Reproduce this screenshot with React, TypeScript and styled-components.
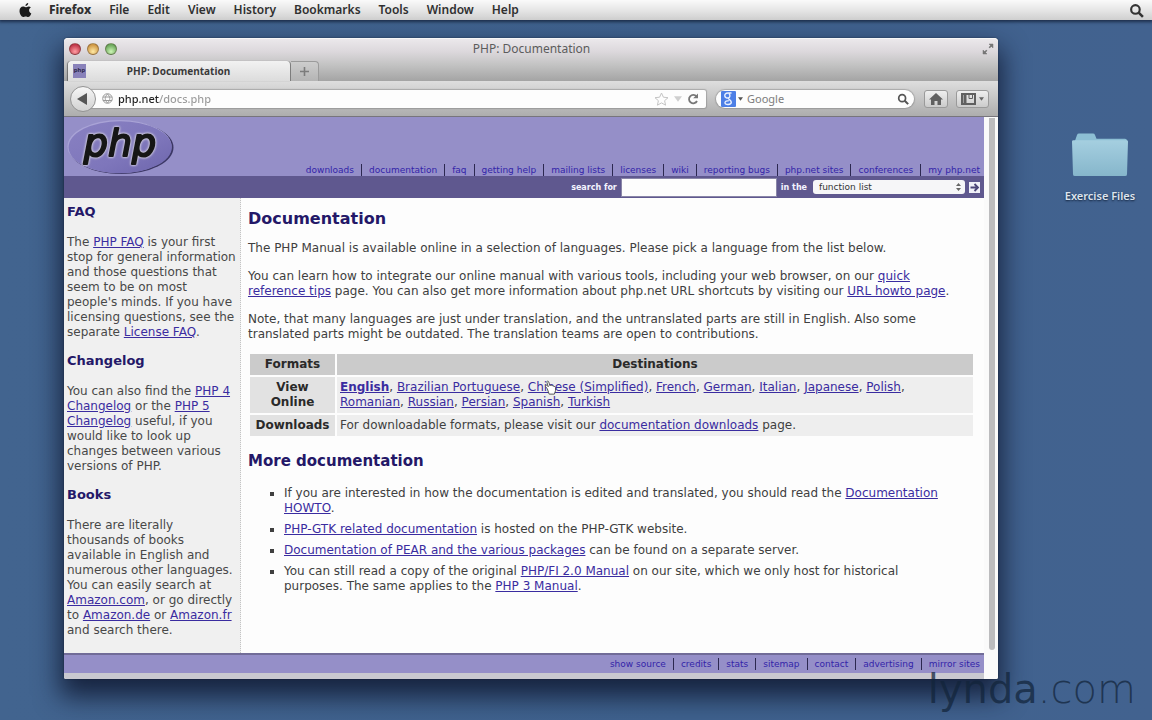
import React from "react";
import styled, { createGlobalStyle } from "styled-components";

const page = '"DejaVu Sans", Verdana, sans-serif';
const system = '"Noto Sans", "Open Sans", sans-serif';

const GlobalStyle = createGlobalStyle`
  * { box-sizing: border-box; }
  body { margin: 0; background: #42628f; font-family: ${page}; }
  button, input, select { font: inherit; margin: 0; padding: 0; border: 0; background: none; }
  svg { display: block; }
`;

const Desktop = styled.div`
  min-height: 100vh;
  position: relative;
  overflow: hidden;
  background: linear-gradient(90deg, #42648f, #3f628e 60%, #42628f);
`;

const MenuBar = styled.header`
  height: 20px;
  display: flex;
  align-items: center;
  padding: 0 8px 0 18px;
  background: linear-gradient(#fafafa, #e4e4e4 55%, #cfcfcf);
  box-shadow: 0 1px 3px 1px rgba(16, 28, 52, 0.75);
  font-family: ${system};
`;

const Menus = styled.nav`
  display: flex;
  flex: 1;
  gap: 18px;
  margin-left: 16px;
`;

const MenuButton = styled.button<{ $strong?: boolean }>`
  font-size: 12px;
  line-height: 20px;
  font-weight: ${(p) => (p.$strong ? 800 : 600)};
  color: #303030;
`;

const IconButton = styled.button`
  display: flex;
  align-items: center;
  justify-content: center;
`;

const Workspace = styled.div`
  display: flex;
  align-items: flex-start;
  padding: 18px 0 40px 64px;
`;

const BrowserWindow = styled.main`
  flex: 1;
  min-width: 0;
  border-radius: 4px 4px 2px 2px;
  background: #fdfdfd;
  box-shadow: 0 14px 26px 4px rgba(12, 20, 44, 0.8), 0 0 2px rgba(0, 0, 0, 0.5);
`;

const Chrome = styled.div`
  border-radius: 4px 4px 0 0;
  background: linear-gradient(#ebe8eb, #dcd8dc 30%, #c4c4c4 60%, #a4a4a4);
  border-top: 1px solid #f6f6f6;
`;

const TitleBar = styled.div`
  height: 22px;
  display: grid;
  grid-template-columns: 60px 1fr 60px;
  align-items: center;
  padding: 0 4px 2px 5px;
  font-family: ${system};
`;

const Lights = styled.div`
  display: flex;
  gap: 6px;
`;

const Light = styled.button<{ $from: string; $to: string }>`
  width: 12px;
  height: 12px;
  border-radius: 6px;
  border: 1px solid rgba(70, 50, 40, 0.4);
  background: radial-gradient(circle at 50% 75%, ${(p) => p.$to}, ${(p) => p.$from} 75%);
`;

const WindowTitle = styled.div`
  text-align: center;
  font-size: 12px;
  line-height: 18px;
  color: #5c5c5c;
`;

const Expand = styled(IconButton)`
  justify-self: end;
`;

const TabStrip = styled.div`
  height: 20px;
  display: flex;
  align-items: stretch;
  padding-left: 4px;
`;

const Tab = styled.button`
  width: 223px;
  display: grid;
  grid-template-columns: 14px 1fr 14px;
  align-items: center;
  padding: 0 6px 0 5px;
  background: linear-gradient(#f2f2f2, #dcdcdc);
  border-radius: 4px 4px 0 0;
  border-right: 1px solid #7d7d7d;
  box-shadow: -1px 0 1px rgba(0, 0, 0, 0.4);
  font-family: ${system};
  font-size: 10px;
  font-weight: 700;
  color: #3a3a3a;
`;

const Favicon = styled.span`
  width: 13px;
  height: 14px;
  background: #8982ba;
  color: #2a2648;
  font-size: 6px;
  line-height: 13px;
  overflow: hidden;
`;

const NewTab = styled(IconButton)`
  width: 28px;
  border: 1px solid #9b9b9b;
  border-width: 1px 1px 0 0;
  border-radius: 0 4px 0 0;
  background: linear-gradient(#cdcdcd, #b4b4b4);
`;

const Toolbar = styled.div`
  height: 36px;
  display: flex;
  align-items: center;
  padding: 0 9px 0 6px;
  background: linear-gradient(#dedede, #c8c8c8 45%, #adadad);
  border-bottom: 1px solid #77757c;
`;

const BackButton = styled(IconButton)`
  width: 26px;
  height: 26px;
  border-radius: 13px;
  border: 1px solid #949494;
  background: linear-gradient(#f6f6f6, #d2d2d2);
  z-index: 1;
`;

const Field = styled.div<{ $round?: boolean }>`
  height: 18px;
  display: flex;
  align-items: center;
  background: #fdfdfd;
  box-shadow: 0 0 1px 1px rgba(120, 120, 120, 0.45);
  ${(p) =>
    p.$round
      ? "width: 198px; border-radius: 9px; padding: 0 5px; margin-left: 10px; gap: 2px;"
      : "flex: 1; border-radius: 0 2px 2px 0; padding: 0 7px 0 12px; margin-left: -6px; gap: 5px;"}
`;

const AddressInput = styled.input`
  flex: 1;
  min-width: 0;
  font-family: ${system};
  font-size: 11px;
  font-weight: 500;
  line-height: 18px;
  height: 18px;
  color: transparent;
  background: linear-gradient(90deg, #222 41px, #9a9a9a 41px);
  background-clip: text;
  -webkit-background-clip: text;
`;

const SearchInput = styled.input`
  flex: 1;
  min-width: 0;
  margin-left: 2px;
  font-family: ${system};
  font-size: 11px;
  height: 18px;
  &::placeholder { color: #7c7c7c; opacity: 1; }
`;

const ToolButton = styled(IconButton)<{ $wide?: boolean }>`
  width: ${(p) => (p.$wide ? 33 : 24)}px;
  height: 18px;
  gap: 3px;
  margin-left: ${(p) => (p.$wide ? 8 : 10)}px;
  border: 1px solid #9a9a9a;
  border-radius: 3px;
  background: linear-gradient(#efefef, #cbcbcb);
`;

const Viewport = styled.div`
  display: flex;
`;

const Site = styled.div`
  flex: 1;
  min-width: 0;
`;

const ScrollTrack = styled.div`
  width: 14px;
  display: flex;
  padding: 1px 3px 29px 5px;
  background: #fafafa;
  border-radius: 0 0 2px 0;
`;

const ScrollThumb = styled.div`
  flex: 1;
  border-radius: 0 0 3px 3px;
  background: #bcbcbe;
`;

const SiteHeader = styled.div`
  height: 59px;
  display: flex;
  align-items: flex-end;
  justify-content: space-between;
  padding-left: 3px;
  background: #958fc8;
`;

const LogoLink = styled.a`
  padding-bottom: 1px;
`;

const LogoText = styled.text`
  font: italic 38px ${page};
  text-anchor: middle;
  fill: #161616;
  stroke: #161616;
  stroke-width: 2px;
  stroke-linejoin: round;
  filter: drop-shadow(0 0 1px #dedbea) drop-shadow(0 0 1px #c9c5da);
`;

const Links = styled.nav<{ $footer?: boolean }>`
  display: flex;
  align-items: center;
  justify-content: flex-end;
  height: ${(p) => (p.$footer ? 18 : 12)}px;
  padding-right: 4px;
`;

const SmallLink = styled.a`
  padding: 0 7px;
  font-size: 9px;
  line-height: 12px;
  color: #3324a8;
  text-decoration: none;
  & + & { border-left: 1px solid #2c2850; }
  &:last-child { padding-right: 0; }
`;

const SearchBar = styled.form`
  height: 22px;
  display: flex;
  align-items: center;
  justify-content: flex-end;
  gap: 4px;
  padding-right: 4px;
  background: #5f588f;
  color: #f4f4ff;
  font-size: 8px;
  font-weight: 700;
`;

const QueryInput = styled.input`
  width: 156px;
  height: 19px;
  background: #fdfdfd;
  border: 1px solid #8a86a8;
`;

const SelectWrap = styled.span`
  display: grid;
  align-items: center;
  margin-left: 2px;
  & > * { grid-area: 1 / 1; }
  & > svg { justify-self: end; margin-right: 4px; }
`;

const ScopeSelect = styled.select`
  appearance: none;
  width: 152px;
  height: 14px;
  padding-left: 6px;
  border-radius: 3px;
  background: #f6f6f8;
  font-size: 9px;
  font-weight: 400;
  line-height: 14px;
  color: #333;
`;

const Columns = styled.div`
  display: grid;
  grid-template-columns: 177px 1fr;
`;

const Sidebar = styled.aside`
  padding: 6px 0 15px 3px;
  background: #f0f0f0;
  border-right: 1px dotted #c4c4c4;
`;

const SideHeading = styled.h2`
  margin: 13px 0 15px;
  font-size: 13px;
  line-height: 16px;
  color: #241868;
  &:first-child { margin-top: 0; }
`;

const SideText = styled.p`
  margin: 0;
  font-size: 12px;
  line-height: 15px;
  color: #484848;
`;

const Article = styled.section`
  padding: 11px 9px 0 7px;
  font-size: 12px;
  line-height: 15px;
  color: #404040;
`;

const Heading = styled.h1`
  margin: 0 0 12px;
  font-size: 16px;
  line-height: 20px;
  color: #241868;
`;

const SubHeading = styled.h2`
  margin: 0 0 15px;
  font-size: 15px;
  line-height: 20px;
  color: #241868;
`;

const Paragraph = styled.p`
  margin: 0 0 13px;
`;

const A = styled.a<{ $strong?: boolean }>`
  color: #3a2ca0;
  text-decoration: underline;
  font-weight: ${(p) => (p.$strong ? 700 : 400)};
`;

const Formats = styled.table`
  width: 100%;
  margin: -3px 0 13px;
  border-spacing: 2px;
  th, td { padding: 3px; background: #eeeeee; }
  thead th { background: #cbcbcb; }
  th { color: #2a2a2a; }
  tbody th { background: #e2e2e2; }
`;

const List = styled.ul`
  margin: 0;
  padding-left: 36px;
  list-style: square;
`;

const Item = styled.li`
  margin-bottom: 6px;
`;

const SiteFooter = styled.footer`
  border-top: 2px solid #716c98;
  border-bottom: 6px solid #c9c9d0;
  border-bottom-left-radius: 2px;
  background: #958fc8;
`;

const DesktopIcons = styled.aside`
  width: 154px;
  padding: 95px 0 0 50px;
`;

const DesktopFile = styled.button`
  width: 104px;
  display: flex;
  flex-direction: column;
  align-items: center;
  gap: 11px;
  font-family: ${system};
  font-size: 11px;
  line-height: 16px;
  font-weight: 600;
  color: #dde4ee;
  text-shadow: 0 1px 2px #10203a;
`;

const Watermark = styled.div`
  position: absolute;
  right: 16px;
  bottom: 8px;
  font-family: ${page};
  font-size: 40px;
  line-height: 46px;
  font-weight: 200;
  color: rgba(18, 36, 58, 0.72);
  b { font-weight: 400; }
`;

const Pointer = styled.svg`
  position: absolute;
  left: 543px;
  top: 380px;
`;

const Magnifier = ({ size = 14, color = "#333" }: { size?: number; color?: string }) => (
  <svg width={size} height={size} viewBox="0 0 14 14" fill="none" stroke={color}>
    <circle cx="6" cy="6" r="4" strokeWidth="2" />
    <path d="M9 9l4 4" strokeWidth="2.4" />
  </svg>
);

const topLinks = ["downloads", "documentation", "faq", "getting help", "mailing lists", "licenses", "wiki", "reporting bugs", "php.net sites", "conferences", "my php.net"];
const footLinks = ["show source", "credits", "stats", "sitemap", "contact", "advertising", "mirror sites"];
const languages = ["Brazilian Portuguese", "Chinese (Simplified)", "French", "German", "Italian", "Japanese", "Polish", "Romanian", "Russian", "Persian", "Spanish", "Turkish"];

export default function App() {
  return (
    <Desktop>
      <GlobalStyle />
      <MenuBar>
        <svg width="15" height="16" viewBox="0 0 15 16" fill="#1a1a1a">
          <path d="M10.2 1c.1 1.600-1.200 2.900-2.700 2.900C7.400 2.400 8.700 1.100 10.200 1zM12.900 5.600c-1.200.8-1.900 1.700-1.800 3 .1 1.500 1 2.400 2.200 2.900-.6 1.800-1.800 3.500-3.200 3.500-.9 0-1.300-.5-2.400-.5s-1.500.5-2.400.5C3.300 15 1.500 11.700 1.500 9c0-2.800 1.700-4.500 3.500-4.500 1.100 0 1.900.7 2.700.7.700 0 1.700-.8 3-.8.9 0 1.700.4 2.200 1.200z" />
        </svg>
        <Menus aria-label="Menu bar">
          {["Firefox", "File", "Edit", "View", "History", "Bookmarks", "Tools", "Window", "Help"].map((m, i) => (
            <MenuButton key={m} $strong={i === 0}>{m}</MenuButton>
          ))}
        </Menus>
        <IconButton aria-label="Spotlight"><Magnifier size={15} /></IconButton>
      </MenuBar>

      <Workspace>
        <BrowserWindow>
          <Chrome>
            <TitleBar>
              <Lights>
                <Light aria-label="Close" $from="#c03548" $to="#ff9da2" />
                <Light aria-label="Minimize" $from="#cf9744" $to="#ffe9a4" />
                <Light aria-label="Zoom" $from="#6aa65a" $to="#cdf6b6" />
              </Lights>
              <WindowTitle>PHP: Documentation</WindowTitle>
              <Expand aria-label="Full screen">
                <svg width="12" height="12" viewBox="0 0 12 12" fill="#777" stroke="#777">
                  <path d="M7 1h4v4zM1 7v4h4z" strokeWidth=".5" />
                  <path d="M7.200 4.800L9.500 2.500M2.500 9.500l2.300-2.300" strokeWidth="1.600" />
                </svg>
              </Expand>
            </TitleBar>
            <TabStrip>
              <Tab>
                <Favicon>php</Favicon>
                <span>PHP: Documentation</span>
              </Tab>
              <NewTab aria-label="New tab">
                <svg width="9" height="9" viewBox="0 0 9 9" stroke="#7c7c7c" strokeWidth="1.600"><path d="M4.500 0v9M0 4.500h9" /></svg>
              </NewTab>
            </TabStrip>
          </Chrome>
          <Toolbar>
            <BackButton aria-label="Back">
              <svg width="12" height="12" viewBox="0 0 12 12" fill="#555"><path d="M0 6L10 0v12z" /></svg>
            </BackButton>
            <Field>
              <svg width="11" height="11" viewBox="0 0 11 11" fill="none" stroke="#9a9a9a">
                <circle cx="5.500" cy="5.500" r="4.800" />
                <path d="M1 4h9M1 7.500h9M5.500 1c-3 3-3 6 0 9M5.500 1c3 3 3 6 0 9" />
              </svg>
              <AddressInput aria-label="Address" defaultValue="php.net/docs.php" />
              <svg width="15" height="14" viewBox="0 0 15 14" fill="none" stroke="#c4c4c4">
                <path d="M7.500 1l1.900 4.200 4.600.5-3.400 3 1 4.500-4.100-2.300-4.100 2.300 1-4.500-3.400-3 4.600-.5z" />
              </svg>
              <svg width="8" height="6" viewBox="0 0 9 6" fill="#cfcfcf"><path d="M0 0h9L4.500 6z" /></svg>
              <svg width="12" height="12" viewBox="0 0 12 12" fill="none" stroke="#777" strokeWidth="1.800">
                <path d="M9.500 3.500A4.200 4.200 0 1 0 10 8" />
                <path d="M11 .5v4.800H6.200z" fill="#777" stroke="none" />
              </svg>
            </Field>
            <Field $round>
              <svg width="15" height="16" viewBox="0 0 15 16">
                <rect width="15" height="16" rx="1" fill="#4d7fe6" />
                <path d="M10.500 2H7C4.500 2 3.500 3.500 3.800 5c.4 2 2.600 2.300 3.800 1.800M7.500 7c-.5 1.500 2.800 2.200 2.800 4.200C10.300 14 4 14.300 4 11.800 4 10 6.500 9.600 8 9.600M8 2.500c1.500 1.500 1 4-.5 4.500" fill="none" stroke="#e8f0ff" strokeWidth="1.400" />
              </svg>
              <svg width="5" height="4" viewBox="0 0 6 4" fill="#555"><path d="M0 0h6L3 4z" /></svg>
              <SearchInput aria-label="Google search" placeholder="Google" />
              <Magnifier size={12} color="#555" />
            </Field>
            <ToolButton aria-label="Home">
              <svg width="14" height="12" viewBox="0 0 14 12" fill="#606060"><path d="M7 0l7 6.500h-2V12H8.500V8h-3v4H2V6.500H0z" /></svg>
            </ToolButton>
            <ToolButton $wide aria-label="Bookmarks">
              <svg width="15" height="12" viewBox="0 0 15 12" fill="none" stroke="#606060" strokeWidth="2">
                <rect x="1" y="1" width="13" height="10" />
                <path d="M4 1v10" strokeWidth="3" />
                <path d="M8 2v3.500h3.500V2" strokeWidth="1" />
              </svg>
              <svg width="5" height="4" viewBox="0 0 6 4" fill="#666"><path d="M0 0h6L3 4z" /></svg>
            </ToolButton>
          </Toolbar>

          <Viewport>
            <Site>
              <SiteHeader>
                <LogoLink href="#home" aria-label="PHP home">
                  <svg width="107" height="56" viewBox="0 0 107 56">
                    <defs>
                      <linearGradient id="disc" x1="0" y1="0" x2="1" y2="1">
                        <stop offset="0" stopColor="#8981c2" />
                        <stop offset=".6" stopColor="#7e76bb" />
                        <stop offset="1" stopColor="#6d65ac" />
                      </linearGradient>
                    </defs>
                    <ellipse cx="54" cy="28.500" rx="52.500" ry="26.500" fill="#3b3664" />
                    <ellipse cx="52.500" cy="27.500" rx="52" ry="26.500" fill="#a9a3d6" />
                    <ellipse cx="53.200" cy="28.200" rx="51.600" ry="26" fill="url(#disc)" />
                    <LogoText x="53" y="37">php</LogoText>
                  </svg>
                </LogoLink>
                <Links aria-label="Site">
                  {topLinks.map((t) => <SmallLink key={t} href="#top">{t}</SmallLink>)}
                </Links>
              </SiteHeader>
              <SearchBar onSubmit={(e) => e.preventDefault()}>
                <label htmlFor="query">search for</label>
                <QueryInput id="query" />
                <label htmlFor="scope">in the</label>
                <SelectWrap>
                  <ScopeSelect id="scope"><option>function list</option></ScopeSelect>
                  <svg width="5" height="8" viewBox="0 0 5 8" fill="#666"><path d="M0 3l2.500-3L5 3zM0 5h5L2.500 8z" /></svg>
                </SelectWrap>
                <IconButton aria-label="Go">
                  <svg width="11" height="11" viewBox="0 0 11 11">
                    <rect width="11" height="11" fill="#f0f0f8" />
                    <path d="M1.500 5.500h6M5.500 2l3.500 3.500L5.500 9" fill="none" stroke="#4b4578" strokeWidth="1.800" />
                  </svg>
                </IconButton>
              </SearchBar>

              <Columns>
                <Sidebar>
                  <SideHeading>FAQ</SideHeading>
                  <SideText>
                    The <A href="#faq">PHP FAQ</A> is your first<br />stop for general information<br />and those questions that<br />seem to be on most<br />people's minds. If you have<br />licensing questions, see the<br />separate <A href="#license">License FAQ</A>.
                  </SideText>
                  <SideHeading>Changelog</SideHeading>
                  <SideText>
                    You can also find the <A href="#php4">PHP 4<br />Changelog</A> or the <A href="#php5">PHP 5<br />Changelog</A> useful, if you<br />would like to look up<br />changes between various<br />versions of PHP.
                  </SideText>
                  <SideHeading>Books</SideHeading>
                  <SideText>
                    There are literally<br />thousands of books<br />available in English and<br />numerous other languages.<br />You can easily search at<br /><A href="#com">Amazon.com</A>, or go directly<br />to <A href="#de">Amazon.de</A> or <A href="#fr">Amazon.fr</A><br />and search there.
                  </SideText>
                </Sidebar>
                <Article>
                  <Heading>Documentation</Heading>
                  <Paragraph>The PHP Manual is available online in a selection of languages. Please pick a language from the list below.</Paragraph>
                  <Paragraph>
                    You can learn how to integrate our online manual with various tools, including your web browser, on our <A href="#tips">quick<br />reference tips</A> page. You can also get more information about php.net URL shortcuts by visiting our <A href="#howto">URL howto page</A>.
                  </Paragraph>
                  <Paragraph>
                    Note, that many languages are just under translation, and the untranslated parts are still in English. Also some<br />translated parts might be outdated. The translation teams are open to contributions.
                  </Paragraph>
                  <Formats>
                    <colgroup><col width="85" /><col /></colgroup>
                    <thead><tr><th scope="col">Formats</th><th scope="col">Destinations</th></tr></thead>
                    <tbody>
                      <tr>
                        <th scope="row">View<br />Online</th>
                        <td>
                          <A $strong href="#en">English</A>
                          {languages.map((l) => <React.Fragment key={l}>, {l === "Romanian" && <br />}<A href="#lang">{l}</A></React.Fragment>)}
                        </td>
                      </tr>
                      <tr>
                        <th scope="row">Downloads</th>
                        <td>For downloadable formats, please visit our <A href="#downloads">documentation downloads</A> page.</td>
                      </tr>
                    </tbody>
                  </Formats>
                  <SubHeading>More documentation</SubHeading>
                  <List>
                    <Item>If you are interested in how the documentation is edited and translated, you should read the <A href="#doc">Documentation<br />HOWTO</A>.</Item>
                    <Item><A href="#gtk">PHP-GTK related documentation</A> is hosted on the PHP-GTK website.</Item>
                    <Item><A href="#pear">Documentation of PEAR and the various packages</A> can be found on a separate server.</Item>
                    <Item>You can still read a copy of the original <A href="#fi">PHP/FI 2.0 Manual</A> on our site, which we only host for historical<br />purposes. The same applies to the <A href="#php3">PHP 3 Manual</A>.</Item>
                  </List>
                </Article>
              </Columns>
              <SiteFooter>
                <Links $footer aria-label="Footer">
                  {footLinks.map((t) => <SmallLink key={t} href="#foot">{t}</SmallLink>)}
                </Links>
              </SiteFooter>
            </Site>
            <ScrollTrack><ScrollThumb /></ScrollTrack>
          </Viewport>
        </BrowserWindow>

        <DesktopIcons>
          <DesktopFile>
            <svg width="58" height="44" viewBox="0 0 58 46" preserveAspectRatio="none">
              <defs>
                <linearGradient id="folder" x1="0" y1="0" x2="0" y2="1">
                  <stop offset="0" stopColor="#a5cfe0" />
                  <stop offset="1" stopColor="#86b6cb" />
                </linearGradient>
              </defs>
              <path d="M4 8l2-6q.5-1.500 2-1.500h14q1.500 0 2 1.500l1.500 4H54q2 0 2 2v6H2v-4q0-1.500 2-2z" fill="#8dbfd4" />
              <path d="M1 9q0-1.500 1.500-1.500h53Q57 7.500 57 9l-1 34q0 2-2 2H4q-2 0-2-2z" fill="url(#folder)" />
            </svg>
            Exercise Files
          </DesktopFile>
        </DesktopIcons>
      </Workspace>

      <Pointer width="14" height="16" viewBox="0 0 16 18" fill="#fff" stroke="#444">
        <path d="M5 10L3 7.500C2 6 3.500 5 4.500 6L6 7.500 4.500 2.500C4 1 6 .5 6.500 2L8 6.500C8.500 5.500 10 5.500 10.300 6.600 11 6 12.200 6.200 12.400 7.300 13.500 7 14.300 7.700 14.300 8.800V12l-1.300 4H7z" />
      </Pointer>
      <Watermark aria-hidden="true"><b>lynda</b>.com</Watermark>
    </Desktop>
  );
}
